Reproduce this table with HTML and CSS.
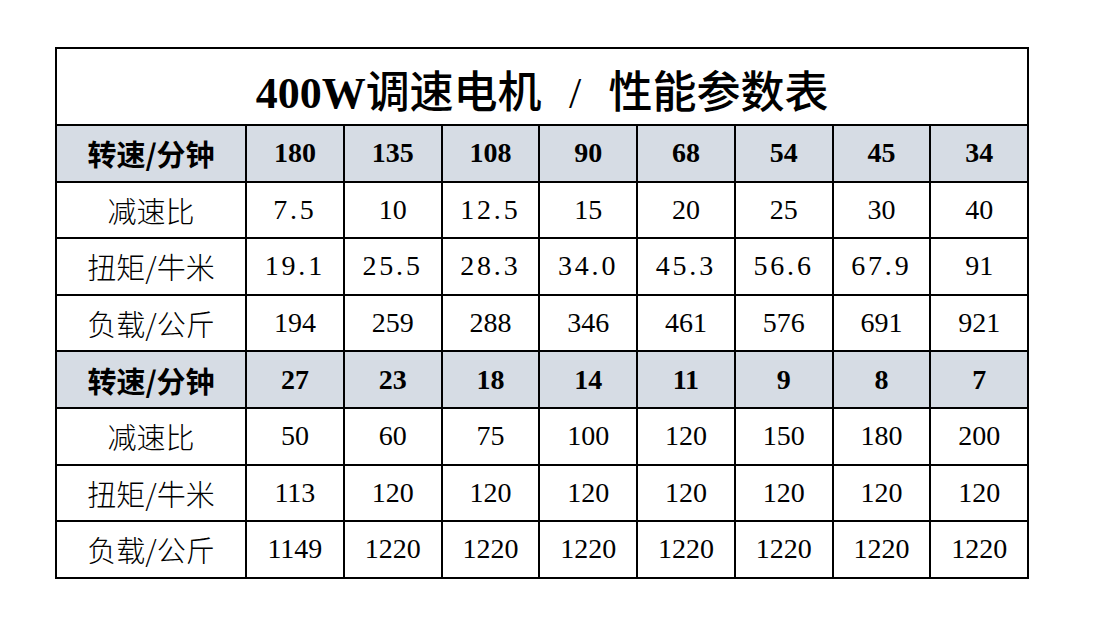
FILE: index.html
```html
<!DOCTYPE html>
<html>

<head>
    <meta charset="UTF-8">
    <meta name="viewport" content="width=device-width, initial-scale=1">
    <link rel="stylesheet" href="styles.css">
    <title>400W调速电机 / 性能参数表</title>
</head>

<body>
    <table class="spec">
        <colgroup>
            <col class="col-label">
            <col span="8">
        </colgroup>
        <tr>
            <th class="title" colspan="9">400W<span class="cjk">调速电机</span><span class="sep">/</span><span class="cjk">性能参数表</span></th>
        </tr>
        <tr class="head">
            <th>转速/分钟</th>
            <td>180</td><td>135</td><td>108</td><td>90</td><td>68</td><td>54</td><td>45</td><td>34</td>
        </tr>
        <tr>
            <th>减速比</th>
            <td class="dec">7.5</td><td>10</td><td class="dec">12.5</td><td>15</td><td>20</td><td>25</td><td>30</td><td>40</td>
        </tr>
        <tr>
            <th>扭矩/牛米</th>
            <td class="dec">19.1</td><td class="dec">25.5</td><td class="dec">28.3</td><td class="dec">34.0</td><td class="dec">45.3</td><td class="dec">56.6</td><td class="dec">67.9</td><td>91</td>
        </tr>
        <tr>
            <th>负载/公斤</th>
            <td>194</td><td>259</td><td>288</td><td>346</td><td>461</td><td>576</td><td>691</td><td>921</td>
        </tr>
        <tr class="head">
            <th>转速/分钟</th>
            <td>27</td><td>23</td><td>18</td><td>14</td><td>11</td><td>9</td><td>8</td><td>7</td>
        </tr>
        <tr>
            <th>减速比</th>
            <td>50</td><td>60</td><td>75</td><td>100</td><td>120</td><td>150</td><td>180</td><td>200</td>
        </tr>
        <tr>
            <th>扭矩/牛米</th>
            <td>113</td><td>120</td><td>120</td><td>120</td><td>120</td><td>120</td><td>120</td><td>120</td>
        </tr>
        <tr>
            <th>负载/公斤</th>
            <td>1149</td><td>1220</td><td>1220</td><td>1220</td><td>1220</td><td>1220</td><td>1220</td><td>1220</td>
        </tr>
    </table>
</body>

</html>
```

FILE: styles.css
```css
* {
    box-sizing: border-box;
}

body {
    margin: 0;
    padding: 47px 0 0 55px;
    background: #fff;
    color: #000;
    font-family: "Liberation Serif", "Noto Sans CJK SC", serif;
}

table.spec {
    border-collapse: collapse;
    table-layout: fixed;
    width: 974px;
}

.spec col {
    width: 97.75px;
}

.spec col.col-label {
    width: 190px;
}

.spec th,
.spec td {
    border: 2px solid #000;
    height: 56.6px;
    padding: 0;
    text-align: center;
    vertical-align: middle;
    font-size: 28px;
    font-weight: normal;
    white-space: nowrap;
}

.spec th {
    font-family: "Noto Sans CJK SC", sans-serif;
    font-weight: 300;
    font-size: 29px;
}

.spec th.title {
    height: 77px;
    padding-top: 4px;
    font-family: "Liberation Serif", "Noto Sans CJK SC", serif;
    font-size: 44px;
    font-weight: bold;
}

.spec th.title .cjk {
    font-family: "Noto Sans CJK SC", sans-serif;
    font-weight: 500;
}

.spec th.title .sep {
    margin: 0 0.62em;
    font-weight: normal;
}

.spec tr.head th,
.spec tr.head td {
    background: #d6dce4;
    font-weight: bold;
}

.spec td.dec {
    letter-spacing: 0.1em;
}
```
